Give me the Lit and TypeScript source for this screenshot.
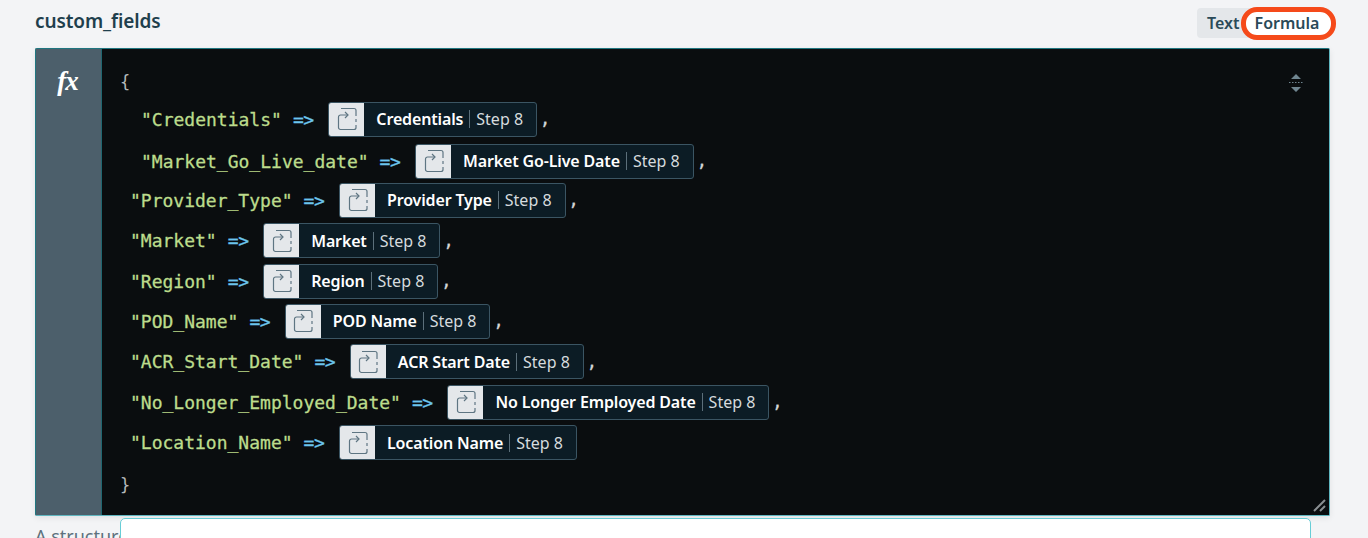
import { LitElement, html, css } from "lit";
import { customElement } from "lit/decorators.js";

interface Row { key: string; label: string; indent: number; comma: boolean; mt: number; }

const ROWS: Row[] = [
  { key: '"Credentials"', label: "Credentials", indent: 39, comma: true, mt: 0 },
  { key: '"Market_Go_Live_date"', label: "Market Go-Live Date", indent: 39, comma: true, mt: 1.5 },
  { key: '"Provider_Type"', label: "Provider Type", indent: 28, comma: true, mt: -1.2 },
  { key: '"Market"', label: "Market", indent: 28, comma: true, mt: 0 },
  { key: '"Region"', label: "Region", indent: 28, comma: true, mt: 0 },
  { key: '"POD_Name"', label: "POD Name", indent: 28, comma: true, mt: 0 },
  { key: '"ACR_Start_Date"', label: "ACR Start Date", indent: 28, comma: true, mt: 0 },
  { key: '"No_Longer_Employed_Date"', label: "No Longer Employed Date", indent: 28, comma: true, mt: 0 },
  { key: '"Location_Name"', label: "Location Name", indent: 28, comma: false, mt: 0 },
];

@customElement("app-root")
export class AppRoot extends LitElement {
  static styles = css`
    :host { display: block; height: 538px; overflow: hidden; background: #f3f4f6; position: relative;
      font-family: "Noto Sans", "Open Sans", sans-serif; }
    .head { display: flex; justify-content: space-between; align-items: flex-start; padding: 8px 38px 0 35px; height: 48px; box-sizing: border-box; }
    .title { font-size: 19px; font-weight: 600; color: #1f3f4d; line-height: 26px; letter-spacing: -0.1px; }
    .toggle { display: flex; align-items: center; background: #e4e7ea; border-radius: 4px; height: 30px; padding-left: 10px; }
    .toggle span { font-size: 16px; font-weight: 600; color: #2a4a58; white-space: nowrap; }
    .text { width: 34px; }
    .formula { background: #fff; border: 5px solid #f54a1a; border-radius: 16px; height: 33px; width: 95px; box-sizing: border-box; display: flex; align-items: center; justify-content: center; padding-right: 3px; margin: 0 -6px 0 0; }
    .editor { margin: 0 38px 0 35px; height: 468px; display: flex; background: #0a0d0f; border: 1px solid #1f7680; border-bottom-color: #5fb6c0; border-right-color: #5fb6c0; border-radius: 2px; box-sizing: border-box; position: relative; box-shadow: 0 2px 6px rgba(0,0,0,.08); }
    .gutter { width: 66px; background: #4c5f6b; border-right: 1px solid #1f6670; flex: none; display: flex; justify-content: center; padding-top: 19px; box-sizing: border-box; }
    .fx { font-family: "Liberation Serif", serif; font-style: italic; font-weight: 700; color: #fff; font-size: 27px; line-height: 26px; letter-spacing: -1px; margin-left: -2px; }
    .code { flex: 1; display: flex; flex-direction: column; padding-top: 16px; }
    .brace { font-family: "DejaVu Sans Mono", monospace; font-size: 17px; color: #b4b8ba; height: 34px; line-height: 34px; padding-left: 18px; flex: none; }
    .brace.end { margin-top: 5px; }
    .row { display: flex; align-items: center; height: 40.4px; flex: none; }
    .key { font-family: "DejaVu Sans Mono", monospace; font-size: 18px; color: #bcdc8c; white-space: pre; -webkit-text-stroke: 0.3px #bcdc8c; }
    .arrow { font-family: "DejaVu Sans Mono", monospace; font-size: 18px; color: #6cc5ee; margin-left: 11px; white-space: pre; letter-spacing: -0.4px; -webkit-text-stroke: 0.3px #6cc5ee; }
    .pill { display: flex; align-items: stretch; height: 35px; margin-left: 14.6px; border: 1px solid #3b5563; border-radius: 3px; background: #0c1c25; box-sizing: border-box; overflow: hidden; }
    .ico { width: 35px; background: #e4e7ea; display: flex; align-items: center; justify-content: center; flex: none; }
    .lbl { display: flex; align-items: center; padding: 0 13px 0 12px; color: #fff; font-size: 16px; font-weight: 600; white-space: nowrap; letter-spacing: -0.15px; }
    .step { font-weight: 400; color: #d6dbde; margin-left: 6px; padding-left: 6px; border-left: 1px solid #5c6f7a; line-height: 18px; letter-spacing: 0; }
    .comma { color: #d2d6d7; font-family: "DejaVu Sans Mono", monospace; font-size: 17px; margin-left: 3px; -webkit-text-stroke: 0.3px #d2d6d7; }
    .expand { position: absolute; right: 25px; top: 24px; }
    .grip { position: absolute; right: 2px; bottom: 2px; }
    .desc { margin: 8px 0 0 35px; font-size: 18px; color: #5d717d; line-height: 24px; white-space: nowrap; }
    .popup { position: absolute; left: 120px; top: 518px; width: 1191px; height: 40px; background: #fff; border: 1px solid #67cdd6; border-radius: 5px; box-sizing: border-box; }
  `;

  private icon() {
    return html`<svg width="22" height="26" viewBox="0 0 22 26" fill="none" stroke="#5e7582" stroke-width="1.2">
      <path d="M5 2.500h13a2 2 0 0 1 2 2V10M20 13v3M20 19v2.500a2 2 0 0 1-2 2H4.500a2 2 0 0 1-2-2V11a2 2 0 0 1 2-2h7" />
      <path d="M9 6l3 3-3 3" />
    </svg>`;
  }

  render() {
    return html`
      <div class="head">
        <div class="title">custom_fields</div>
        <div class="toggle"><span class="text">Text</span><span class="formula">Formula</span></div>
      </div>
      <div class="editor">
        <div class="gutter"><span class="fx">fx</span></div>
        <div class="code">
          <div class="brace">{</div>
          ${ROWS.map((r) => html`
            <div class="row" style="padding-left:${r.indent}px;margin-top:${r.mt}px">
              <span class="key">${r.key}</span><span class="arrow">=&gt;</span>
              <span class="pill"><span class="ico">${this.icon()}</span><span class="lbl">${r.label}<span class="step">Step 8</span></span></span>
              ${r.comma ? html`<span class="comma">,</span>` : ""}
            </div>`)}
          <div class="brace end">}</div>
        </div>
        <svg class="expand" width="16" height="20" viewBox="0 0 16 20" fill="#6f8590">
          <path d="M8 1l5 5H3zM8 19l5-5H3z" />
          <path d="M1 9.500h14" stroke="#6f8590" stroke-dasharray="1.500 1.500" fill="none" />
        </svg>
        <svg class="grip" width="14" height="14" viewBox="0 0 14 14" stroke="#8a8f92" stroke-width="2" fill="none">
          <path d="M1 12L12 1M7 12l5-5" />
        </svg>
      </div>
      <div class="desc">A structure of custom fields</div>
      <div class="popup"></div>
    `;
  }
}
